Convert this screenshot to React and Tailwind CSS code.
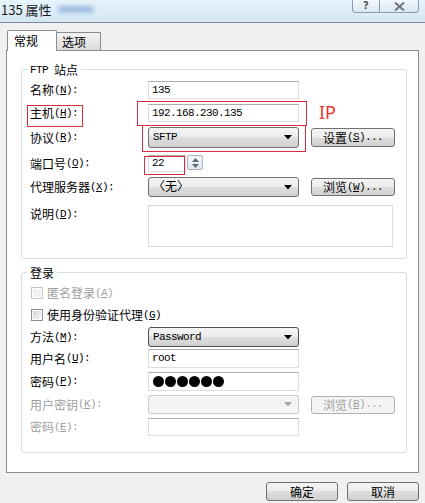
import React from "react";

const mono = "[font-family:Liberation_Mono,monospace] text-[11px] tracking-[-0.6px]";

const Mn = ({ k, colon = true }) => (
  <span className={mono}>
    (<span className="underline underline-offset-1">{k}</span>){colon ? ":" : ""}
  </span>
);

const Label = ({ cjk, k, disabled, extra = "" }) => (
  <div className={`w-[118px] shrink-0 flex items-center ${disabled ? "text-[#a0a0a0]" : "text-black"} ${extra}`}>
    <span>{cjk}</span>
    <Mn k={k} />
  </div>
);

const TextBox = ({ children, h = "h-[18px]", w = "w-[151px]" }) => (
  <div className={`${h} ${w} border border-[#dadde3] border-t-[#abadb3] bg-white flex items-center pl-[3px] ${mono}`}>
    {children}
  </div>
);

const Arrow = ({ color = "#000" }) => (
  <svg width="8" height="5" viewBox="0 0 8 5">
    <path d="M0 0 H8 L4 4.5 Z" fill={color} />
  </svg>
);

const Combo = ({ children, h = "h-[21px]", focused }) => (
  <div
    className={`${h} w-[151px] rounded-[3px] border ${focused ? "border-[#4d4d4d]" : "border-[#707070]"} bg-[linear-gradient(#f4f4f4_0%,#ececec_50%,#dedede_50%,#d0d0d0_100%)] flex items-center justify-between pl-[4px] pr-[6px] ${mono}`}
  >
    <span>{children}</span>
    <Arrow />
  </div>
);

const Btn = ({ children, w = "w-[84px]", h = "h-[19px]", disabled, extra = "" }) => (
  <div
    className={`${w} ${h} rounded-[3px] border ${disabled ? "border-[#adb2b5] bg-[#f4f4f4] text-[#a0a0a0]" : "border-[#707070] bg-[linear-gradient(#f4f4f4_0%,#ececec_50%,#dedede_50%,#d0d0d0_100%)] text-black"} flex items-center justify-center ${extra}`}
  >
    {children}
  </div>
);

const Checkbox = ({ disabled }) => (
  <div className={`w-[12px] h-[12px] border ${disabled ? "border-[#c4c4c4]" : "border-[#8e8f8f]"} bg-white p-[1px] shrink-0`}>
    <div className={`w-full h-full ${disabled ? "bg-[#f1f1f1]" : "bg-[linear-gradient(135deg,#d0d3d8,#f7f7f7)]"}`} />
  </div>
);

export default function App() {
  return (
    <div className="relative w-[425px] h-[503px] bg-[#f0f0f0] overflow-hidden [font-family:Noto_Sans_CJK_SC,Noto_Sans,sans-serif] text-[12px] leading-none text-black">
      {/* Title bar */}
      <div className="h-[23px] border-b border-[#7a8a98] bg-[linear-gradient(#e6f3fb,#d3e7f5)] flex items-start justify-between">
        <div className="flex items-center h-[19px] pl-[1px] gap-[6px]">
          <span className="text-[13px] text-[#1a1a1a]">135 属性</span>
          <div className="w-[36px] h-[7px] rounded-full bg-[#9fbbe0] blur-[2px]" />
        </div>
        <div className="flex mr-[6px]">
          <div className="w-[28px] h-[13px] border border-t-0 border-[#8d9aa7] rounded-bl-[4px] bg-[linear-gradient(#f2f8fc,#dbe7f1)] flex items-center justify-center text-[10px] font-bold text-[#555] [font-family:DejaVu_Sans,sans-serif]">
            ?
          </div>
          <div className="w-[39px] h-[13px] border border-t-0 border-l-0 border-[#8d9aa7] rounded-br-[4px] bg-[linear-gradient(#f2f8fc,#dbe7f1)] flex items-center justify-center">
            <svg width="11" height="9" viewBox="0 0 11 9">
              <path d="M1 0.5 L10 8.5 M10 0.5 L1 8.5" stroke="#6f7883" strokeWidth="2" />
            </svg>
          </div>
        </div>
      </div>

      {/* Tabs */}
      <div className="pt-[7px] pl-[7px] flex items-end h-[27px]">
        <div className="relative z-10 w-[50px] h-[21px] mb-[-1px] border border-b-0 border-[#898c95] rounded-t-[2px] bg-white flex items-start pt-[4px] pl-[6px]">
          常规
        </div>
        <div className="w-[44px] h-[18px] border border-l-0 border-b-0 border-[#898c95] bg-[linear-gradient(#f2f2f2,#dcdcdc)] flex items-center pl-[5px]">
          选项
        </div>
      </div>

      {/* Panel */}
      <div className="ml-[6px] w-[413px] h-[423px] border border-[#898c95] bg-white">
        {/* FTP group */}
        <div className="relative ml-[14px] mt-[18px] w-[386px] h-[190px] border border-[#d5dfe5] rounded-[3px] pl-[8px]">
          <div className="absolute -top-[7px] left-[5px] bg-white px-[3px] flex items-center h-[14px]">
            <span className={mono}>FTP</span>
            <span className="ml-[6px]">站点</span>
          </div>

          <div className="flex items-center h-[18px] mt-[11px]">
            <Label cjk="名称" k="N" />
            <TextBox>135</TextBox>
          </div>
          <div className="flex items-center h-[18px] mt-[5px]">
            <Label cjk="主机" k="H" />
            <TextBox>192.168.230.135</TextBox>
          </div>
          <div className="flex items-center h-[21px] mt-[5px]">
            <Label cjk="协议" k="R" />
            <Combo>SFTP</Combo>
            <Btn extra="ml-[12px]">
              设置<Mn k="S" colon={false} />
              <span className={mono}>...</span>
            </Btn>
          </div>
          <div className="flex items-center h-[17px] mt-[7px]">
            <Label cjk="端口号" k="O" />
            <TextBox h="h-[17px]" w="w-[38px]">22</TextBox>
            <div className="ml-[1px] w-[16px] h-[15px] self-start border border-[#a8b3bd] rounded-[2px] bg-[linear-gradient(#f5f8fb,#dfe6ec)] flex flex-col items-center justify-center gap-[2px]">
              <svg width="7" height="4" viewBox="0 0 7 4"><path d="M0 4 H7 L3.5 0 Z" fill="#5a6b7a" /></svg>
              <svg width="7" height="4" viewBox="0 0 7 4"><path d="M0 0 H7 L3.5 4 Z" fill="#5a6b7a" /></svg>
            </div>
          </div>
          <div className="flex items-center h-[20px] mt-[5px]">
            <Label cjk="代理服务器" k="X" />
            <Combo h="h-[20px]">
              <span className="[font-family:Noto_Sans_CJK_SC,sans-serif] text-[12px] tracking-normal">〈无〉</span>
            </Combo>
            <Btn h="h-[18px]" extra="ml-[12px]">
              浏览<Mn k="W" colon={false} />
              <span className={mono}>...</span>
            </Btn>
          </div>
          <div className="flex items-start mt-[8px]">
            <Label cjk="说明" k="D" extra="pt-[3px]" />
            <div className="w-[245px] h-[42px] border border-[#dadde3] border-t-[#cfd3da] bg-white" />
          </div>
        </div>

        {/* Login group */}
        <div className="relative ml-[14px] mt-[13px] w-[386px] h-[181px] border border-[#d5dfe5] rounded-[3px] pl-[8px]">
          <div className="absolute -top-[7px] left-[5px] bg-white px-[3px] flex items-center h-[14px]">
            登录
          </div>

          <div className="flex items-center h-[16px] mt-[12px] pl-[1px] text-[#a0a0a0]">
            <Checkbox disabled />
            <span className="ml-[4px]">匿名登录</span>
            <Mn k="A" colon={false} />
          </div>
          <div className="flex items-center h-[16px] mt-[6px] pl-[1px]">
            <Checkbox />
            <span className="ml-[4px]">使用身份验证代理</span>
            <Mn k="G" colon={false} />
          </div>
          <div className="flex items-center h-[20px] mt-[4px]">
            <Label cjk="方法" k="M" />
            <Combo h="h-[20px]" focused>Password</Combo>
          </div>
          <div className="flex items-center h-[19px] mt-[2px]">
            <Label cjk="用户名" k="U" />
            <TextBox h="h-[19px]">root</TextBox>
          </div>
          <div className="flex items-center h-[19px] mt-[4px]">
            <Label cjk="密码" k="P" />
            <div className="h-[19px] w-[151px] border border-[#dadde3] border-t-[#abadb3] bg-white flex items-center pl-[3px]">
              {[0, 1, 2, 3, 4, 5].map((i) => (
                <span key={i} className="w-[12px] h-[12px] flex items-center justify-center">
                  <span className="w-[11px] h-[11px] rounded-full bg-black" />
                </span>
              ))}
            </div>
          </div>
          <div className="flex items-center h-[19px] mt-[4px]">
            <Label cjk="用户密钥" k="K" disabled />
            <div className="h-[19px] w-[151px] rounded-[2px] border border-[#c9ccd0] bg-[#f4f4f4] flex items-center justify-end pr-[6px]">
              <Arrow color="#a8a8a8" />
            </div>
            <Btn h="h-[18px]" disabled extra="ml-[12px]">
              浏览<Mn k="B" colon={false} />
              <span className={mono}>...</span>
            </Btn>
          </div>
          <div className="flex items-center h-[18px] mt-[4px]">
            <Label cjk="密码" k="E" disabled />
            <TextBox>{""}</TextBox>
          </div>
        </div>
      </div>

      {/* Bottom buttons */}
      <div className="flex justify-end gap-[9px] mt-[9px] pr-[6px]">
        <Btn w="w-[72px]" h="h-[19px]">确定</Btn>
        <Btn w="w-[72px]" h="h-[19px]">取消</Btn>
      </div>

      {/* Red annotations */}
      <div className="absolute left-[27px] top-[105px] w-[56px] h-[22px] border border-[#d42f3f]" />
      <div className="absolute left-[137px] top-[101px] w-[170px] h-[25px] border border-[#d42f3f]" />
      <div className="absolute left-[142px] top-[125px] w-[164px] h-[27px] border border-[#d42f3f]" />
      <div className="absolute left-[144px] top-[156px] w-[41px] h-[19px] border border-[#d42f3f]" />
      <div className="absolute left-[319px] top-[103px] text-[18px] leading-none text-[#e8372f] [font-family:Noto_Sans,sans-serif]">
        IP
      </div>
    </div>
  );
}
